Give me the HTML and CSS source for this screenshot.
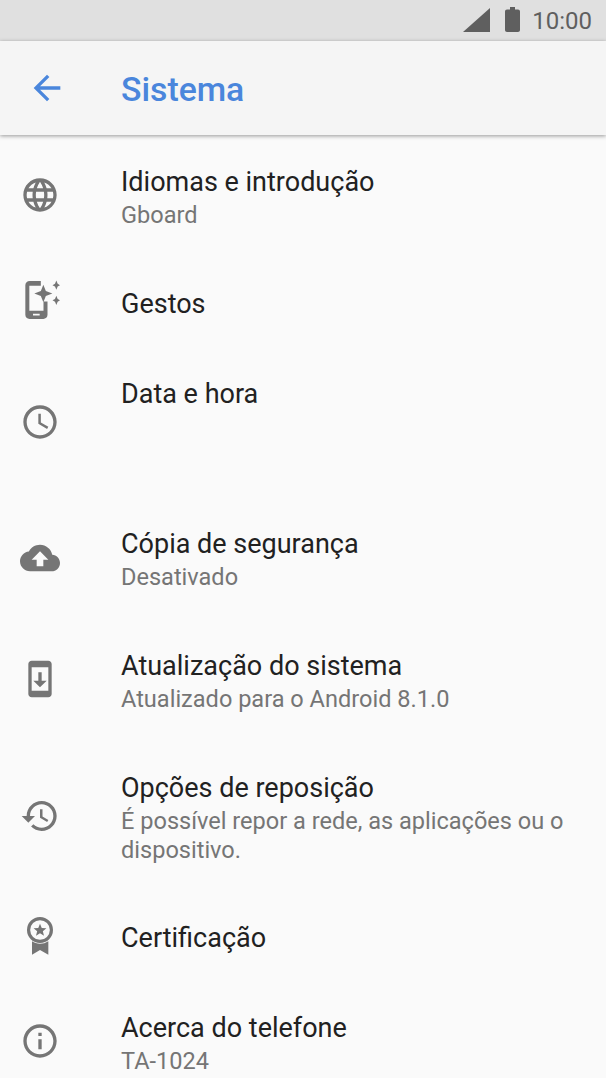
FILE: index.html
```html
<!DOCTYPE html>
<html lang="pt">

<head>
    <meta charset="UTF-8">
    <meta name="viewport" content="width=device-width, initial-scale=1.0">
    <title>Sistema</title>

    <link rel="stylesheet" href="styles.css">

</head>

<body>
    <div class="status-bar">
        <svg class="signal" viewBox="0 0 27 24"><path d="M27 0V24H0z"/></svg>
        <svg class="battery" viewBox="0 0 15 25"><path d="M5 0h5v2.500h3c1.100 0 2 .9 2 2V23c0 1.100-.9 2-2 2H2c-1.100 0-2-.9-2-2V4.500c0-1.100.9-2 2-2h3z"/></svg>
        <span class="clock">10:00</span>
    </div>

    <header class="app-bar">
        <svg class="back" viewBox="0 0 24 24"><path d="M20 11H7.830l5.590-5.590L12 4l-8 8 8 8 1.410-1.410L7.830 13H20v-2z"/></svg>
        <h1 class="page-title">Sistema</h1>
    </header>

    <main class="list">
        <div class="row row-language">
            <svg class="icon" viewBox="0 0 24 24"><path d="M11.990 2C6.470 2 2 6.480 2 12s4.470 10 9.990 10C17.520 22 22 17.520 22 12S17.520 2 11.990 2zm6.930 6h-2.950c-.32-1.250-.78-2.450-1.380-3.560 1.840.63 3.370 1.910 4.330 3.560zM12 4.040c.83 1.200 1.480 2.530 1.910 3.960h-3.820c.43-1.430 1.080-2.760 1.910-3.960zM4.260 14C4.100 13.360 4 12.690 4 12s.1-1.360.26-2h3.380c-.08.66-.14 1.320-.14 2 0 .68.06 1.340.14 2H4.260zm.82 2h2.950c.32 1.250.78 2.450 1.380 3.560-1.840-.63-3.370-1.900-4.330-3.560zm2.950-8H5.080c.96-1.660 2.490-2.930 4.330-3.560C8.810 5.550 8.350 6.750 8.030 8zM12 19.960c-.83-1.200-1.480-2.530-1.910-3.960h3.820c-.43 1.430-1.080 2.760-1.910 3.960zM14.340 14H9.660c-.09-.66-.16-1.320-.16-2 0-.68.07-1.350.16-2h4.680c.09.65.16 1.320.16 2 0 .68-.07 1.340-.16 2zm.25 5.560c.6-1.110 1.060-2.310 1.380-3.560h2.950c-.96 1.650-2.490 2.930-4.330 3.560zM16.360 14c.08-.66.14-1.320.14-2 0-.68-.06-1.340-.14-2h3.380c.16.64.26 1.310.26 2s-.1 1.360-.26 2h-3.380z"/></svg>
            <div class="row-text">
                <div class="row-title">Idiomas e introdução</div>
                <div class="row-sub">Gboard</div>
            </div>
        </div>

        <div class="row row-gestures">
            <svg class="icon" viewBox="0 0 24 24"><path fill-rule="evenodd" d="M5.800 1.200h6.700V4H5.600v15.100h8.500v-5.600h2.400v8c0 1.400-1.100 2.500-2.500 2.500H5.700c-1.400 0-2.500-1.100-2.500-2.500V3.700c0-1.400 1.100-2.500 2.600-2.500zM7.800 20.800v1.100h4v-1.100z"/><path d="M14 3.400l1.500 3.800 3.900 1.500-3.900 1.500-1.500 3.800-1.500-3.800-3.900-1.500 3.900-1.500zM21.800.9l.8 2 1.400.8-1.400.8-.8 2-.8-2-1.500-.8 1.500-.8zM21.800 10l.8 2 1.400.8-1.400.8-.8 2-.8-2-1.500-.8 1.500-.8z"/></svg>
            <div class="row-text">
                <div class="row-title">Gestos</div>
            </div>
        </div>

        <div class="row row-date">
            <svg class="icon" viewBox="0 0 24 24"><path d="M11.990 2C6.470 2 2 6.480 2 12s4.470 10 9.990 10C17.520 22 22 17.520 22 12S17.520 2 11.990 2zM12 20c-4.420 0-8-3.580-8-8s3.580-8 8-8 8 3.580 8 8-3.580 8-8 8zm.5-13H11v6l5.250 3.150.75-1.230-4.500-2.670z"/></svg>
            <div class="row-text">
                <div class="row-title">Data e hora</div>
            </div>
        </div>

        <div class="row row-backup">
            <svg class="icon" viewBox="0 0 24 24"><path d="M19.350 10.040C18.670 6.590 15.640 4 12 4 9.110 4 6.600 5.640 5.350 8.040 2.340 8.360 0 10.910 0 14c0 3.310 2.690 6 6 6h13c2.760 0 5-2.240 5-5 0-2.640-2.050-4.780-4.650-4.960zM14 13v4h-4v-4H7l5-5 5 5h-3z"/></svg>
            <div class="row-text">
                <div class="row-title">Cópia de segurança</div>
                <div class="row-sub">Desativado</div>
            </div>
        </div>

        <div class="row row-update">
            <svg class="icon" viewBox="0 0 24 24"><path d="M17 1.010L7 1c-1.100 0-2 .9-2 2v18c0 1.100.9 2 2 2h10c1.100 0 2-.9 2-2V3c0-1.100-.9-1.990-2-1.990zM17 19H7V5h10v14zm-1-6h-3V8h-2v5H8l4 4 4-4z"/></svg>
            <div class="row-text">
                <div class="row-title">Atualização do sistema</div>
                <div class="row-sub">Atualizado para o Android 8.1.0</div>
            </div>
        </div>

        <div class="row row-reset">
            <svg class="icon" viewBox="0 0 24 24"><path d="M13 3c-4.970 0-9 4.030-9 9H1l3.890 3.890.07.14L9 12H6c0-3.870 3.130-7 7-7s7 3.130 7 7-3.130 7-7 7c-1.930 0-3.680-.79-4.940-2.060l-1.420 1.420C8.270 19.990 10.510 21 13 21c4.970 0 9-4.030 9-9s-4.030-9-9-9zm-1 5v5l4.280 2.540.72-1.210-3.500-2.080V8H12z"/></svg>
            <div class="row-text">
                <div class="row-title">Opções de reposição</div>
                <div class="row-sub">É possível repor a rede, as aplicações ou o dispositivo.</div>
            </div>
        </div>

        <div class="row row-cert">
            <svg class="icon" viewBox="0 0 24 24"><path fill-rule="evenodd" d="M12 1.200a7.800 7.800 0 1 1 0 15.600 7.800 7.800 0 0 1 0-15.600zm0 1.900a5.900 5.900 0 1 0 0 11.800 5.900 5.900 0 0 0 0-11.800z"/><path d="M12 5.200l1.050 2.600 2.800.2-2.150 1.800.7 2.700L12 11l-2.400 1.500.7-2.700L8.150 8l2.800-.2z"/><path d="M7.200 15.800c1.400.9 3 1.400 4.800 1.400s3.400-.5 5-1.500v8.100l-5-2.800-4.800 2.800z"/></svg>
            <div class="row-text">
                <div class="row-title">Certificação</div>
            </div>
        </div>

        <div class="row row-about">
            <svg class="icon" viewBox="0 0 24 24"><path d="M11 17h2v-6h-2v6zm1-15C6.480 2 2 6.480 2 12s4.480 10 10 10 10-4.480 10-10S17.520 2 12 2zm0 18c-4.410 0-8-3.590-8-8s3.590-8 8-8 8 3.590 8 8-3.590 8-8 8zM11 9h2V7h-2v2z"/></svg>
            <div class="row-text">
                <div class="row-title">Acerca do telefone</div>
                <div class="row-sub">TA-1024</div>
            </div>
        </div>
    </main>
</body>

</html>
```

FILE: styles.css
```css
* {
    box-sizing: border-box;
    font-family: Roboto, sans-serif;
}

html,
body {
    height: 100%;
}

body {
    margin: 0;
    overflow: hidden;
    background-color: #fafafa;
}

.status-bar {
    height: 41px;
    padding-right: 14px;
    display: flex;
    align-items: center;
    justify-content: flex-end;
    background-color: #e0e0e0;
}

.signal {
    width: 27px;
    height: 24px;
    margin-top: -1px;
    margin-right: 15px;
    fill: #5f5f5f;
}

.battery {
    width: 15px;
    height: 25px;
    margin-top: -2px;
    margin-right: 12px;
    fill: #5f5f5f;
}

.clock {
    font-size: 24px;
    color: #5f5f5f;
}

.app-bar {
    height: 94px;
    position: relative;
    display: flex;
    align-items: center;
    background-color: #f5f5f5;
    box-shadow: 0 1px 4px rgba(0, 0, 0, 0.4);
}

.back {
    width: 40px;
    height: 40px;
    margin-left: 27px;
    margin-right: 54px;
    fill: #4a86dc;
}

.page-title {
    margin: 2px 0 0;
    font-size: 33.750px;
    font-weight: 500;
    color: #4a86dc;
}

.list {
    padding-top: 2px;
}

.row {
    height: 122px;
    padding-left: 20px;
    padding-right: 36px;
    display: flex;
    align-items: center;
}

.icon {
    flex: none;
    width: 40px;
    height: 40px;
    margin-right: 61px;
    fill: #757575;
}

.row-text {
    flex: 1;
}

.row-title {
    font-size: 27px;
    line-height: 34px;
    color: #212121;
}

.row-sub {
    font-size: 23.550px;
    line-height: 29px;
    margin-top: 2px;
    margin-bottom: 1px;
    color: #757575;
}

.row-language .icon {
    margin-top: -6px;
}

.row-gestures {
    height: 90px;
}

.row-gestures .icon {
    margin-top: -10px;
}

.row-date {
    height: 151px;
    align-items: flex-start;
    padding-top: 28px;
}

.row-date .icon {
    margin-top: 25px;
}

.row-backup {
    height: 120px;
}

.row-backup .icon {
    margin-top: -4px;
}

.row-update {
    height: 124px;
}

.row-update .icon {
    margin-top: -6px;
}

.row-reset {
    height: 148px;
}

.row-reset .icon {
    margin-top: -4px;
}

.row-cert {
    height: 92px;
}

.row-cert .icon {
    margin-top: -6px;
}

.row-about {
    height: 120px;
}

.row-about .icon {
    margin-top: -7px;
}
```
